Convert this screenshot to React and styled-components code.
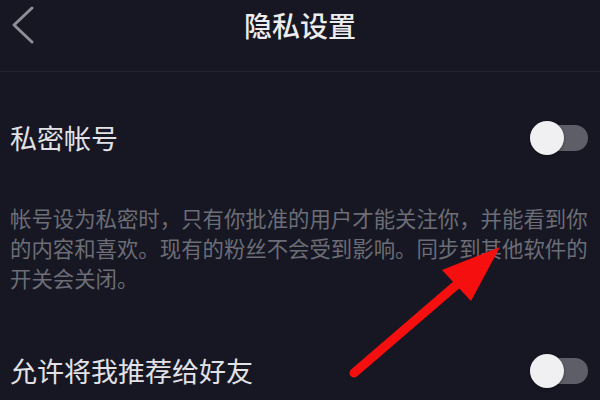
import React from 'react';
import styled, { createGlobalStyle } from 'styled-components';

const GlobalStyle = createGlobalStyle`
  html, body {
    margin: 0;
    padding: 0;
    background: #161722;
  }
  * {
    box-sizing: border-box;
  }
`;

const App = () => {
  return (
    <>
      <GlobalStyle />
      <Page>
        <Header>
          <BackButton>
            <svg width="40" height="50" viewBox="0 0 40 50">
              <polyline
                points="32,8 14,25 32,42"
                fill="none"
                stroke="#8e8e96"
                strokeWidth="3"
                strokeLinecap="round"
                strokeLinejoin="round"
              />
            </svg>
          </BackButton>
          <Title>隐私设置</Title>
          <span />
        </Header>

        <Content>
          <Row $top={36}>
            <Label>私密帐号</Label>
            <Toggle />
          </Row>
          <Description>
            帐号设为私密时，只有你批准的用户才能关注你，并能看到你
            <br />
            的内容和喜欢。现有的粉丝不会受到影响。同步到其他软件的
            <br />
            开关会关闭。
          </Description>
          <Row $top={48}>
            <Label>允许将我推荐给好友</Label>
            <Toggle />
          </Row>
        </Content>

        <Arrow width="600" height="400" viewBox="0 0 600 400">
          <line
            x1="354"
            y1="373"
            x2="462"
            y2="280"
            stroke="#f50f0f"
            strokeWidth="9"
            strokeLinecap="round"
          />
          <polygon points="500,247 442,270 471,301" fill="#f50f0f" />
        </Arrow>
      </Page>
    </>
  );
};

export default App;

const Page = styled.div`
  position: relative;
  width: 600px;
  height: 400px;
  overflow: hidden;
  background: #161722;
  font-family: 'Noto Sans CJK SC', 'Noto Sans', sans-serif;
`;

const Header = styled.div`
  display: grid;
  grid-template-columns: 60px 1fr 60px;
  align-items: start;
  height: 72px;
  border-bottom: 1px solid #22232d;
`;

const BackButton = styled.div`
  display: flex;
  padding-left: 0;
`;

const Title = styled.div`
  text-align: center;
  color: #ececee;
  font-size: 28px;
  font-weight: 500;
  line-height: 50px;
`;

const Content = styled.div`
  display: flex;
  flex-direction: column;
`;

const Row = styled.div`
  display: flex;
  align-items: center;
  justify-content: space-between;
  height: 60px;
  margin-top: ${({ $top }) => $top}px;
  padding: 0 12px 0 10px;
`;

const Label = styled.div`
  color: #e2e2e6;
  font-size: 27px;
  line-height: 60px;
`;

const Toggle = styled.div`
  position: relative;
  width: 58px;
  height: 26px;
  border-radius: 13px;
  background: #5d5e67;

  &::before {
    content: '';
    position: absolute;
    left: 0;
    top: 50%;
    width: 34px;
    height: 34px;
    margin-top: -17px;
    border-radius: 50%;
    background: #f0f0f2;
    box-shadow: 0 1px 3px rgba(0, 0, 0, 0.4);
  }
`;

const Description = styled.div`
  margin-top: 35px;
  padding: 0 10px;
  color: #6c6d76;
  font-size: 21.4px;
  line-height: 30px;
  white-space: nowrap;
`;

const Arrow = styled.svg`
  position: absolute;
  left: 0;
  top: 0;
  pointer-events: none;
`;
